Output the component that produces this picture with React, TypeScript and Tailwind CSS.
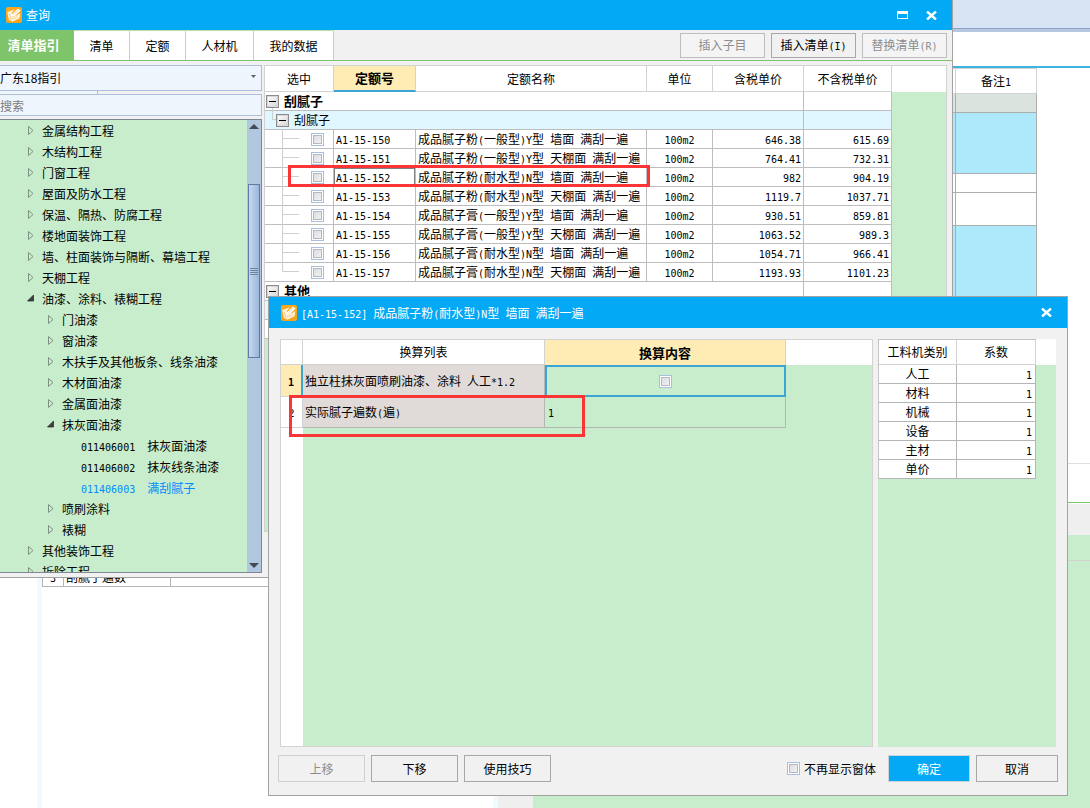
import React from "react";
import { clsx } from "clsx";

const treeItems = [
  { label: "金属结构工程", level: 0 },
  { label: "木结构工程", level: 0 },
  { label: "门窗工程", level: 0 },
  { label: "屋面及防水工程", level: 0 },
  { label: "保温、隔热、防腐工程", level: 0 },
  { label: "楼地面装饰工程", level: 0 },
  { label: "墙、柱面装饰与隔断、幕墙工程", level: 0 },
  { label: "天棚工程", level: 0 },
  { label: "油漆、涂料、裱糊工程", level: 0, open: true },
  { label: "门油漆", level: 1 },
  { label: "窗油漆", level: 1 },
  { label: "木扶手及其他板条、线条油漆", level: 1 },
  { label: "木材面油漆", level: 1 },
  { label: "金属面油漆", level: 1 },
  { label: "抹灰面油漆", level: 1, open: true },
  { label: "011406001  抹灰面油漆", level: 2 },
  { label: "011406002  抹灰线条油漆", level: 2 },
  { label: "011406003  满刮腻子", level: 2, active: true },
  { label: "喷刷涂料", level: 1 },
  { label: "裱糊", level: 1 },
  { label: "其他装饰工程", level: 0 },
  { label: "拆除工程", level: 0 },
];

const quotaRows = [
  { code: "A1-15-150", name: "成品腻子粉(一般型)Y型 墙面 满刮一遍", tax: "646.38", net: "615.69" },
  { code: "A1-15-151", name: "成品腻子粉(一般型)Y型 天棚面 满刮一遍", tax: "764.41", net: "732.31" },
  { code: "A1-15-152", name: "成品腻子粉(耐水型)N型 墙面 满刮一遍", tax: "982", net: "904.19" },
  { code: "A1-15-153", name: "成品腻子粉(耐水型)N型 天棚面 满刮一遍", tax: "1119.7", net: "1037.71" },
  { code: "A1-15-154", name: "成品腻子膏(一般型)Y型 墙面 满刮一遍", tax: "930.51", net: "859.81" },
  { code: "A1-15-155", name: "成品腻子膏(一般型)Y型 天棚面 满刮一遍", tax: "1063.52", net: "989.3" },
  { code: "A1-15-156", name: "成品腻子膏(耐水型)N型 墙面 满刮一遍", tax: "1054.71", net: "966.41" },
  { code: "A1-15-157", name: "成品腻子膏(耐水型)N型 天棚面 满刮一遍", tax: "1193.93", net: "1101.23" },
];

const tabs = ["清单", "定额", "人材机", "我的数据"];
const categories = ["人工", "材料", "机械", "设备", "主材", "单价"];

// Latin runs are set half as wide as the Chinese characters
const Txt = ({ children }: { children: string }) => (
  <>
    {children.split(/([\x20-\x7e]+)/).map((part, i) =>
      i % 2 ? (
        <span key={i} className="whitespace-pre font-['DejaVu_Sans_Mono',monospace] text-[10px] leading-none">
          {part}
        </span>
      ) : (
        part
      )
    )}
  </>
);

const Logo = () => (
  <svg width="16" height="16" viewBox="0 0 16 16" className="shrink-0">
    <defs>
      <linearGradient id="logo" x1="0" y1="0" x2="0" y2="1">
        <stop offset="0" stopColor="#ffa81c" />
        <stop offset="1" stopColor="#f7a21a" />
      </linearGradient>
    </defs>
    <rect width="16" height="16" rx="2" fill="url(#logo)" />
    <path d="M1.300 5 8.500 2.600 5.800 6 6 9.800l3.600-.8 4.700-3-.8 5.200-7 3.600-3.700-2z" fill="#fff3dd" />
    <path d="M5.200 9.600 6 7.200 11.800 1.400l2.800 2-5.800 5.800z" fill="#fff" />
    <path d="M7.400 7.800 12.300 3M3.300 6.800l1.500 5.400M5 12.300l6.600-2.300" stroke="#f9b54a" strokeWidth=".6" fill="none" />
  </svg>
);

const CloseButton = () => (
  <button aria-label="关闭" className="flex h-5 w-5 items-center justify-center">
    <svg width="11" height="9" viewBox="0 0 11 9">
      <path d="M1 .5 10 8.5M10 .5 1 8.5" stroke="#fff" strokeWidth="2.4" />
    </svg>
  </button>
);

const Check = ({ label, id }: { label?: string; id?: string }) => (
  <input
    type="checkbox"
    id={id}
    aria-label={label}
    className="m-0 block h-[13px] w-[13px] shrink-0 appearance-none border border-[#a9bfe2] bg-linear-to-br from-[#d5d9de] to-[#f6f6f6] shadow-[inset_0_0_0_1px_#fff,inset_0_0_0_2px_#b4b9bf]"
  />
);

const Collapse = () => (
  <button
    aria-label="折叠"
    className="flex h-[13px] w-[13px] shrink-0 items-center justify-center border border-[#8c8c8c] bg-linear-to-br from-white to-[#d4d4d4] shadow-[inset_0_0_0_1px_#d8d8d8]"
  >
    <span className="h-px w-[7px] bg-black" />
  </button>
);

const Arrow = ({ open }: { open?: boolean }) => (
  <svg width="7" height="9" viewBox="0 0 7 9" className="shrink-0">
    {open ? (
      <path d="M6.5 1v6H.5z" fill="#404040" stroke="#222" strokeWidth=".7" />
    ) : (
      <path d="M1.500.5v8L6 4.500z" fill="none" stroke="#7d917f" />
    )}
  </svg>
);

const Branch = ({ last }: { last: boolean }) => (
  <svg width="17" height="18" viewBox="0 0 17 18" className="ml-[17px] shrink-0 overflow-visible">
    <path d={last ? "M.5-1V8.500H17" : "M.5-1V18M.5 8.500H17"} stroke="#cfcfcf" fill="none" />
  </svg>
);

const GroupRow = ({ label, level }: { label: string; level: number }) => (
  <tr className={clsx("h-[19px]", level ? "bg-[#e1f7ff]" : "bg-white")}>
    <td colSpan={5} className="border-r border-b border-[#bdbdbd] p-0">
      <div className={clsx("flex h-[18px] items-center", level ? "pl-[3px]" : "pl-px")}>
        {level === 1 && (
          <svg width="8" height="18" viewBox="0 0 8 18" className="overflow-visible">
            <path d="M4.500-3V8.500H8" stroke="#cfcfcf" fill="none" />
          </svg>
        )}
        <Collapse />
        <span className={clsx("ml-[5px]", !level && "text-[13px] font-bold")}>{label}</span>
      </div>
    </td>
    <td className="border-r border-b border-[#bdbdbd]" />
    <td className="bg-[#c8edcc]" />
  </tr>
);

const Tree = () => (
  <div className="flex min-h-0 flex-1 border-y border-r border-[#7f8792] bg-[#c8edcc]">
    <ul className="min-w-0 flex-1 overflow-hidden">
      {treeItems.map((item) => (
        <li
          key={item.label}
          className={clsx(
            "flex h-[21px] items-center gap-2 whitespace-nowrap",
            item.level === 0 && "pl-[27px]",
            item.level === 1 && "pl-[47px]",
            item.level === 2 && "pl-[81px]",
            item.active && "text-[#008cff]"
          )}
        >
          {item.level < 2 && <Arrow open={item.open} />}
          <span>
            <Txt>{item.label}</Txt>
          </span>
        </li>
      ))}
    </ul>
    <div className="flex w-[14px] flex-col items-center bg-[#b1c6df]">
      <svg width="10" height="5" viewBox="0 0 10 5" className="mt-1">
        <path d="M0 5 5 0l5 5z" fill="#444b55" />
      </svg>
      <div className="mt-[55px] flex h-[174px] w-3 flex-col items-center justify-center gap-px border border-[#5f7ba5] bg-linear-to-r from-[#c5d8ef] to-[#9cb6d8]">
        <span className="h-px w-2 bg-[#71839d]" />
        <span className="h-px w-2 bg-[#71839d]" />
        <span className="h-px w-2 bg-[#71839d]" />
        <span className="h-px w-2 bg-[#71839d]" />
      </div>
      <svg width="10" height="5" viewBox="0 0 10 5" className="mt-auto mb-1">
        <path d="M0 0h10L5 5z" fill="#444b55" />
      </svg>
    </div>
  </div>
);

const QuotaTable = () => (
  <div className="mb-[45px] min-w-0 flex-1 overflow-hidden border border-[#d2d2d2] bg-[#c8edcc]">
    <table className="w-full table-fixed border-separate border-spacing-0">
      <colgroup>
        <col className="w-[69px]" />
        <col className="w-[82px]" />
        <col className="w-[231px]" />
        <col className="w-[66px]" />
        <col className="w-[91px]" />
        <col className="w-[88px]" />
        <col />
      </colgroup>
      <thead>
        <tr className="h-[26px] bg-white">
          <th className="border-r border-b border-[#d2d2d2] p-0 font-normal">选中</th>
          <th className="border-r border-b-2 border-r-[#d2d2d2] border-b-[#3ba6d6] bg-[#ffecb5] p-0 text-[13px] font-bold">
            定额号
          </th>
          {["定额名称", "单位", "含税单价", "不含税单价"].map((h) => (
            <th key={h} className="border-r border-b border-[#d2d2d2] p-0 font-normal">
              {h}
            </th>
          ))}
          <th className="p-0" />
        </tr>
      </thead>
      <tbody>
        <GroupRow label="刮腻子" level={0} />
        <GroupRow label="刮腻子" level={1} />
        {quotaRows.map((row, i) => (
          <tr key={row.code} className="h-[19px] bg-white *:whitespace-nowrap *:border-[#bdbdbd]">
            <td className="border-r border-b p-0">
              <div className="flex h-[18px] items-center gap-3">
                <Branch last={i === quotaRows.length - 1} />
                <Check label={row.code} />
              </div>
            </td>
            <td
              className={clsx(
                "border-r border-b px-[2px] py-0",
                row.code === "A1-15-152" && "shadow-[inset_0_0_0_1px_#808080]"
              )}
            >
              <Txt>{row.code}</Txt>
            </td>
            <td className="border-r border-b px-[2px] py-0">
              <Txt>{row.name}</Txt>
            </td>
            <td className="border-r border-b p-0 text-center">
              <Txt>100m2</Txt>
            </td>
            <td className="border-r border-b px-[2px] py-0 text-right">
              <Txt>{row.tax}</Txt>
            </td>
            <td className="border-r border-b px-[2px] py-0 text-right">
              <Txt>{row.net}</Txt>
            </td>
            <td className="bg-[#c8edcc]" />
          </tr>
        ))}
        <GroupRow label="其他" level={0} />
        <tr className="h-[19px] bg-[#e1f7ff]">
          <td colSpan={6} className="border-r border-b border-[#bdbdbd]" />
          <td className="bg-[#c8edcc]" />
        </tr>
        <tr className="h-[19px] bg-white">
          <td colSpan={6} className="border-r border-b border-[#bdbdbd]" />
          <td className="bg-[#c8edcc]" />
        </tr>
      </tbody>
    </table>
  </div>
);

const QueryWindow = () => (
  <section className="absolute top-0 right-[137px] bottom-[230px] left-0 flex flex-col border-r border-b border-[#a2a2a2] bg-[#f1f1f1]">
    <header className="flex h-[30px] shrink-0 items-center bg-[#03a9f4] pr-[11px] pl-[6px] text-white">
      <Logo />
      <h1 className="ml-1 flex-1">查询</h1>
      <button aria-label="最大化" className="mr-[9px] flex h-5 w-5 items-center justify-center">
        <span className="h-2 w-[11px] border border-t-[3px] border-white" />
      </button>
      <CloseButton />
    </header>

    <div className="flex h-[31px] shrink-0 items-stretch border-b border-[#7ec46a]">
      <nav className="flex flex-1">
        <button className="w-[74px] bg-[#7ec46a] pr-[7px] text-[13px] font-bold text-white">清单指引</button>
        {tabs.map((tab) => (
          <button
            key={tab}
            className={clsx(
              "border-t border-r border-[#b5e39f] bg-white",
              tab.length === 2 && "w-[56px]",
              tab.length === 3 && "w-[68px]",
              tab.length === 4 && "w-[80px]"
            )}
          >
            {tab}
          </button>
        ))}
      </nav>
      <div className="flex items-center gap-[6px] pr-[5px]">
        <button disabled className="h-[25px] w-[85px] border border-[#bdbdbd] bg-[#f4f4f4] text-[#8d8d8d]">
          插入子目
        </button>
        <button className="h-[25px] w-[85px] border border-[#a8a8a8]">
          <Txt>插入清单(I)</Txt>
        </button>
        <button disabled className="h-[25px] w-[85px] border border-[#bdbdbd] bg-[#f4f4f4] text-[#8d8d8d]">
          <Txt>替换清单(R)</Txt>
        </button>
      </div>
    </div>

    <div className="flex min-h-0 flex-1 gap-[2px] pt-1 pr-[5px]">
      <aside className="flex w-[262px] shrink-0 flex-col pb-1">
        <div className="relative">
          <select
            aria-label="清单指引库"
            className="block h-[26px] w-full appearance-none border border-l-0 border-[#aebfdb] bg-[#eef5fd] outline-none"
          >
            <option>广东18指引</option>
          </select>
          <svg width="5" height="3" viewBox="0 0 5 3" className="pointer-events-none absolute top-[10px] right-[6px]">
            <path d="M0 0h5L2.500 3z" fill="#566070" />
          </svg>
        </div>
        <div className="h-[3px] w-[98px] border-r border-[#aebfdb] bg-[#eef5fd]" />
        <input
          aria-label="搜索"
          placeholder="搜索"
          className="mb-[3px] h-[22px] w-full border border-l-0 border-[#aebfdb] bg-[#eef5fd] outline-none placeholder:text-[#7c7c7c]"
        />
        <Tree />
      </aside>
      <QuotaTable />
    </div>

    <div className="pointer-events-none absolute top-[165px] left-[288px] h-[22px] w-[362px] border-3 border-[#fb3535]" />
  </section>
);

const ConversionDialog = () => (
  <section
    role="dialog"
    aria-label="换算"
    className="absolute top-[296px] right-[22px] bottom-3 left-[268px] flex flex-col border border-[#a2a2a2] bg-[#f1f1f1]"
  >
    <header className="flex h-[31px] shrink-0 items-center bg-[#03a9f4] pr-[11px] pl-3 text-white">
      <Logo />
      <h2 className="ml-1 flex-1">
        <Txt>[A1-15-152] 成品腻子粉(耐水型)N型 墙面 满刮一遍</Txt>
      </h2>
      <CloseButton />
    </header>

    <div className="flex min-h-0 flex-1 gap-[5px] px-[11px] pt-[11px]">
      <div className="flex min-w-0 flex-1 flex-col border border-[#d2d2d2] bg-[#c8edcc]">
        <table className="w-full table-fixed border-separate border-spacing-0">
          <colgroup>
            <col className="w-[22px]" />
            <col className="w-[242px]" />
            <col className="w-[241px]" />
            <col />
          </colgroup>
          <thead>
            <tr className="h-[25px] bg-white">
              <th className="border-r border-b border-[#d2d2d2] p-0" />
              <th className="border-r border-b border-[#d2d2d2] p-0 font-normal">换算列表</th>
              <th className="border-r border-[#d2d2d2] bg-[#ffecb5] p-0 text-[13px] font-bold">换算内容</th>
              <th className="p-0" />
            </tr>
          </thead>
          <tbody>
            <tr className="h-8">
              <td className="border-r-2 border-b border-r-[#3ba6d6] border-b-[#d2d2d2] bg-[#ffecb5] p-0 text-center font-bold">
                <Txt>1</Txt>
              </td>
              <td className="border-r border-b border-[#b5b5b5] bg-[#e0dbd9] px-[2px] py-0">
                <Txt>独立柱抹灰面喷刷油漆、涂料 人工*1.2</Txt>
              </td>
              <td className="border-2 border-[#3ba6d6] p-0">
                <div className="flex justify-center">
                  <Check label="独立柱抹灰面喷刷油漆、涂料" />
                </div>
              </td>
              <td />
            </tr>
            <tr className="h-[31px]">
              <td className="border-r border-b border-[#d2d2d2] bg-white p-0 text-center">
                <Txt>2</Txt>
              </td>
              <td className="border-r border-b border-[#b5b5b5] bg-[#e0dbd9] px-[2px] py-0">
                <Txt>实际腻子遍数(遍)</Txt>
              </td>
              <td className="border-r border-b border-[#b5b5b5] px-[3px] py-0">
                <Txt>1</Txt>
              </td>
              <td />
            </tr>
          </tbody>
        </table>
        <div className="w-[22px] flex-1 bg-white" />
      </div>

      <div className="w-[178px] bg-[#c8edcc]">
        <div className="bg-linear-to-b from-white from-[26px] to-transparent to-[26px]">
          <table className="w-[158px] table-fixed border-separate border-spacing-0 border-t border-l border-[#c4c4c4]">
            <thead>
              <tr className="h-[25px] bg-white">
                <th className="w-[78px] border-r border-b border-[#d2d2d2] p-0 font-normal">工料机类别</th>
                <th className="border-r border-b border-[#d2d2d2] p-0 font-normal">系数</th>
              </tr>
            </thead>
            <tbody>
              {categories.map((c) => (
                <tr key={c} className="h-[19px] bg-white">
                  <td className="border-r border-b border-[#b5b5b5] p-0 text-center">{c}</td>
                  <td className="border-r border-b border-[#b5b5b5] px-[3px] py-0 text-right">
                    <Txt>1</Txt>
                  </td>
                </tr>
              ))}
            </tbody>
          </table>
        </div>
      </div>
    </div>

    <footer className="flex shrink-0 items-center gap-[6px] pt-2 pr-[9px] pb-[13px] pl-[9px]">
      <button disabled className="h-[27px] w-[87px] border border-[#cfcfcf] text-[#8d8d8d]">
        上移
      </button>
      <button className="h-[27px] w-[87px] border border-[#a8a8a8]">下移</button>
      <button className="h-[27px] w-[87px] border border-[#a8a8a8]">使用技巧</button>
      <div className="mr-[6px] ml-auto flex items-center gap-1">
        <Check id="hide" />
        <label htmlFor="hide">不再显示窗体</label>
      </div>
      <button className="h-[27px] w-[82px] border border-[#c9d3d9] bg-[#03a9f4] text-white">确定</button>
      <button className="h-[27px] w-[82px] border border-[#a8a8a8]">取消</button>
    </footer>

    <div className="pointer-events-none absolute top-[98px] left-5 h-[42px] w-[296px] border-3 border-[#fb3535]" />
  </section>
);

const Workspace = () => (
  <main className="flex h-full flex-col bg-white">
    <div className="h-8 shrink-0 border-b-3 border-[#b6c9e2] bg-[#d6e4f3] shadow-[inset_0_-1px_0_#8fa1c4]" />
    <div className="h-9 shrink-0 border-b-2 border-[#3fb4e0]" />
    <div className="flex min-h-0 flex-1">
      <div className="flex w-[498px] shrink-0 border-r-5 border-[#effcff] pl-[37px]">
        <div className="w-[5px] bg-[#effcff]" />
        <div className="flex-1 pt-[500px]">
          <table className="w-full table-fixed border-separate border-spacing-0">
            <tbody>
              <tr className="h-[19px]">
                <td className="w-[22px] border-x border-b border-[#b5b5b5] p-0 text-center">
                  <Txt>3</Txt>
                </td>
                <td className="w-[107px] border-r border-b border-[#b5b5b5] px-[2px] py-0">刮腻子遍数</td>
                <td className="border-b border-[#b5b5b5]" />
              </tr>
            </tbody>
          </table>
        </div>
      </div>
      <div className="flex min-w-0 flex-1 flex-col">
        <div className="h-[396px] shrink-0 overflow-hidden border-b border-[#e0e0e0] pr-[53px]">
          <table className="w-full table-fixed border-separate border-spacing-0">
            <thead>
              <tr className="h-[26px]">
                <th className="border border-[#d2d2d2]" />
                <th className="w-[81px] border-t border-r border-b border-[#d2d2d2] p-0 font-normal">
                  <Txt>备注1</Txt>
                </th>
              </tr>
            </thead>
            <tbody className="*:*:border-r *:*:border-b *:*:border-[#adadad]">
              <tr className="h-[19px] bg-[#dae3dd]"><td /><td /></tr>
              <tr className="h-[61px] bg-[#ade8fb]"><td /><td /></tr>
              <tr className="h-[19px]"><td /><td /></tr>
              <tr className="h-[33px]"><td /><td /></tr>
              <tr className="h-[237px] bg-[#ade8fb]"><td /><td /></tr>
            </tbody>
          </table>
        </div>
        <div className="h-[39px] shrink-0 border-b border-[#7ec46a]" />
        <div className="mt-px h-[31px] shrink-0 bg-[#efefef]" />
        <div className="flex flex-1 bg-[#c8edcc]">
          <div className="w-[35px] bg-[#efefef]" />
          <div className="h-[26px] flex-1 border-b border-[#d2d2d2]" />
        </div>
      </div>
    </div>
  </main>
);

const App: React.FC = () => {
  return (
    <div className="relative h-screen overflow-hidden font-['Noto_Sans_CJK_SC',sans-serif] text-[12px] leading-[16px] text-black">
      <Workspace />
      <QueryWindow />
      <ConversionDialog />
    </div>
  );
};

export default App;
